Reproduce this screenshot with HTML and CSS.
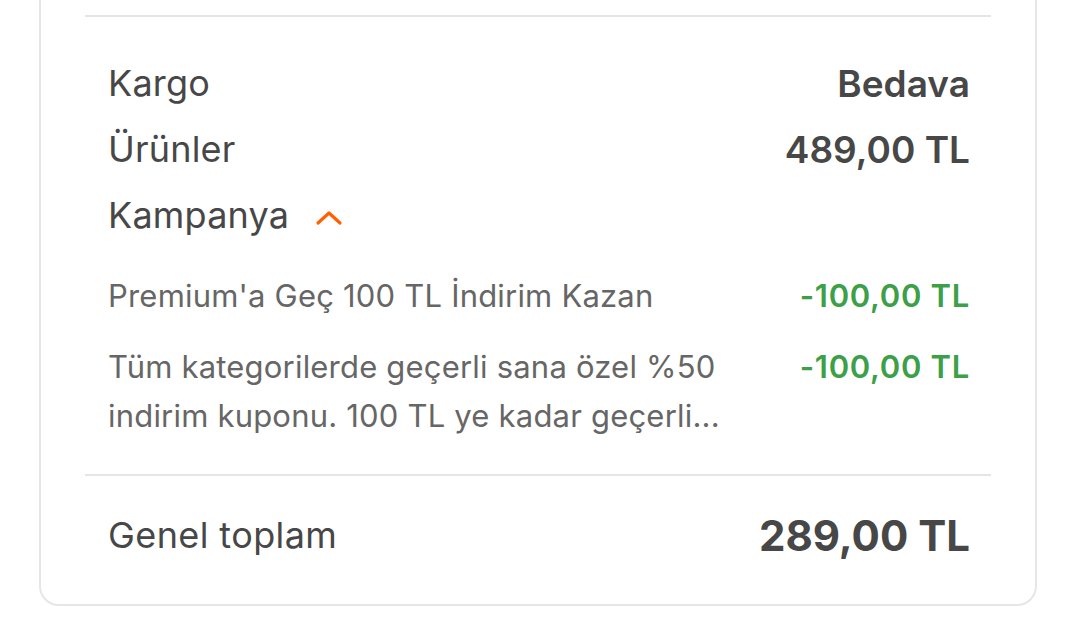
FILE: index.html
```html
<!DOCTYPE html>
<html lang="tr">
<head>
<meta charset="utf-8">
<link rel="stylesheet" href="styles.css">
</head>
<body>
<div class="card">
  <div class="top-space"></div>
  <div class="divider"></div>
  <div class="summary">
    <div class="row"><span class="label">Kargo</span><span class="value">Bedava</span></div>
    <div class="row"><span class="label">Ürünler</span><span class="value">489,00 TL</span></div>
    <div class="row"><span class="label campaign">Kampanya
      <svg class="chev" width="28" height="18" viewBox="0 0 28 18"><path d="M3 14 L14 4 L25 14" fill="none" stroke="#ff6000" stroke-width="3.2" stroke-linecap="round" stroke-linejoin="round"/></svg></span></div>
    <div class="items">
      <div class="item"><span class="desc">Premium'a Geç 100 TL İndirim Kazan</span><span class="disc">-100,00 TL</span></div>
      <div class="item"><span class="desc">Tüm kategorilerde geçerli sana özel %50 indirim kuponu. 100 TL ye kadar geçerli...</span><span class="disc">-100,00 TL</span></div>
    </div>
  </div>
  <div class="divider"></div>
  <div class="total"><span class="label total-label">Genel toplam</span><span class="total-value">289,00 TL</span></div>
</div>
</body>
</html>
```
FILE: styles.css
```css
* { box-sizing: border-box; }
html, body { margin: 0; padding: 0; background: #fff; }
body {
  font-family: Inter, "Noto Sans", "Liberation Sans", sans-serif;
  color: #474747;
  overflow: hidden;
}
.card {
  margin: -40px 37px 0 39px;
  border: 2px solid #e6e6e6;
  border-radius: 20px;
  padding: 0 44px 39px;
}
.top-space { height: 53px; }
.divider { height: 2px; background: #e5e5e5; }
.summary { padding: 33px 21px 34px 23px; }
.row {
  display: flex;
  justify-content: space-between;
  align-items: center;
  height: 66px;
}
.label { font-size: 36px; font-weight: 400; color: #474747; letter-spacing: 0.2px; }
.total-label { letter-spacing: 0.4px; }
.value { font-size: 37px; font-weight: 600; color: #474747; letter-spacing: 0; }
.campaign { display: flex; align-items: center; gap: 26px; }
.chev { margin-top: 6px; }
.items { display: flex; flex-direction: column; gap: 22px; padding-top: 23px; }
.item { display: flex; justify-content: space-between; align-items: flex-start; gap: 40px; }
.desc {
  font-size: 31px;
  line-height: 49px;
  color: #666;
  max-width: 650px;
  letter-spacing: 0.2px;
}
.disc { font-size: 31px; line-height: 49px; font-weight: 600; color: #3d9f47; white-space: nowrap; letter-spacing: 0.7px; }
.total {
  display: flex;
  justify-content: space-between;
  align-items: center;
  height: 60px;
  margin-top: 29px;
  padding: 0 21px 0 23px;
}
.total-value { font-size: 42px; font-weight: 700; color: #474747; letter-spacing: 0; }
```
